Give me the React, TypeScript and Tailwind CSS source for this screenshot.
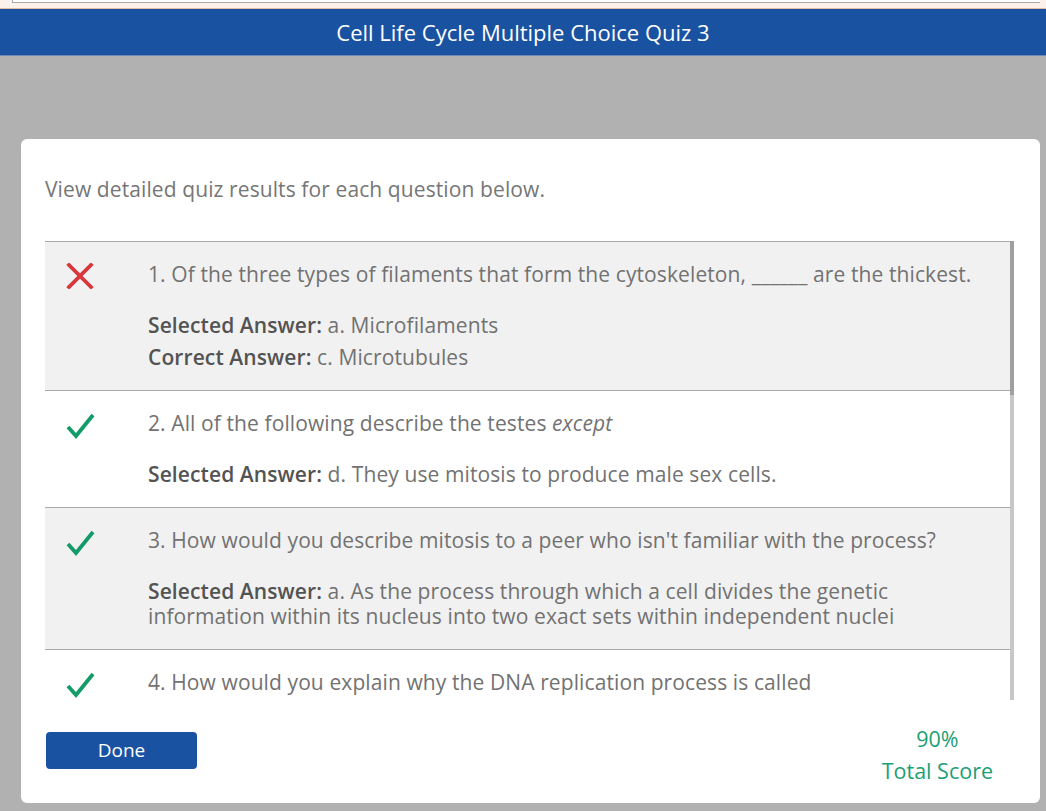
import React from "react";

const font = { fontFamily: '"Open Sans", "Noto Sans", Arial, sans-serif' };

function XIcon() {
  return (
    <svg width="30" height="26" viewBox="0 0 30 26" fill="none">
      <path d="M4 2 L26 24 M26 2 L4 24" stroke="#d8363b" strokeWidth="3.8" strokeLinecap="square" />
    </svg>
  );
}

function CheckIcon() {
  return (
    <svg width="30" height="28" viewBox="0 0 30 28" fill="none">
      <path d="M3 15 L11 24 L28 3" stroke="#139b69" strokeWidth="3.8" strokeLinejoin="miter" />
    </svg>
  );
}

type Row = {
  ok: boolean;
  q: React.ReactNode;
  answers: React.ReactNode[];
  shaded: boolean;
};

const label = "font-semibold text-[#535353]";

const rows: Row[] = [
  {
    ok: false,
    shaded: true,
    q: <>1. Of the three types of filaments that form the cytoskeleton, ______ are the thickest.</>,
    answers: [
      <>
        <span className={label}>Selected Answer:</span> a. Microfilaments
      </>,
      <>
        <span className={label}>Correct Answer:</span> c. Microtubules
      </>,
    ],
  },
  {
    ok: true,
    shaded: false,
    q: (
      <>
        2. All of the following describe the testes <em>except</em>
      </>
    ),
    answers: [
      <>
        <span className={label}>Selected Answer:</span> d. They use mitosis to produce male sex cells.
      </>,
    ],
  },
  {
    ok: true,
    shaded: true,
    q: <>3. How would you describe mitosis to a peer who isn't familiar with the process?</>,
    answers: [
      <>
        <span className={label}>Selected Answer:</span> a. As the process through which a cell divides the genetic
        <br />
        information within its nucleus into two exact sets within independent nuclei
      </>,
    ],
  },
  {
    ok: true,
    shaded: false,
    q: (
      <>
        4. How would you explain why the DNA replication process is called
        <br />
        “semiconservative”?
      </>
    ),
    answers: [
      <>
        <span className={label}>Selected Answer:</span> b. Because each new DNA molecule keeps one original strand
      </>,
    ],
  },
];

export default function App() {
  return (
    <div className="w-[1046px] h-[811px] bg-[#b1b1b1] flex flex-col overflow-hidden" style={font}>
      <div className="h-[9px] bg-[#fdf2eb] border-b border-[#e8bfa3] pl-[12px] pr-[6px]">
        <div className="h-[3px] bg-white border-b border-l border-[#a9a9a9]" />
      </div>
      <div className="h-[47px] bg-[#1a52a2] border-b border-[#6f89b8] flex items-center justify-center text-white text-[22px]">
        Cell Life Cycle Multiple Choice Quiz 3
      </div>
      <div className="flex-1 pt-[83px] pl-[21px] pr-[6px] pb-[8px]">
        <div className="h-full bg-white rounded-[6px] flex flex-col pl-[24px] pr-[26px]">
          <div className="pt-[37px] h-[102px] text-[21px] text-[#767676] leading-[26px] tracking-[0.1px]">
            View detailed quiz results for each question below.
          </div>
          <div className="flex h-[459px]">
            <div className="flex-1 overflow-hidden border-t border-[#a9a9a9]">
              {rows.map((r, i) => (
                <div
                  key={i}
                  className={`flex border-b border-[#a9a9a9] pt-[19px] pb-[20px] ${r.shaded ? "bg-[#f1f1f1]" : "bg-white"}`}
                >
                  <div className="w-[103px] shrink-0 pl-[20px] pt-[2px]">{r.ok ? <CheckIcon /> : <XIcon />}</div>
                  <div className="flex-1 text-[21px] text-[#727272] leading-[26px] tracking-[0.1px]">
                    <div>{r.q}</div>
                    <div className="mt-[26px] flex flex-col gap-[7px]">
                      {r.answers.map((a, j) => (
                        <div key={j} className="leading-[25px]">
                          {a}
                        </div>
                      ))}
                    </div>
                  </div>
                </div>
              ))}
            </div>
            <div className="w-[4px] flex flex-col">
              <div className="h-[154px] bg-[#9f9f9f]" />
              <div className="flex-1 bg-[#c7c7c7]" />
            </div>
          </div>
          <div className="flex-1 flex items-start justify-between pt-[23px]">
            <button className="ml-[1px] mt-[9px] w-[151px] h-[37px] bg-[#1a52a2] rounded-[4px] text-white text-[19px]">
              Done
            </button>
            <div className="flex flex-col items-center text-[#1c9e74] text-[21.5px] leading-[32px] mr-[21px]">
              <span>90%</span>
              <span>Total Score</span>
            </div>
          </div>
        </div>
      </div>
    </div>
  );
}
